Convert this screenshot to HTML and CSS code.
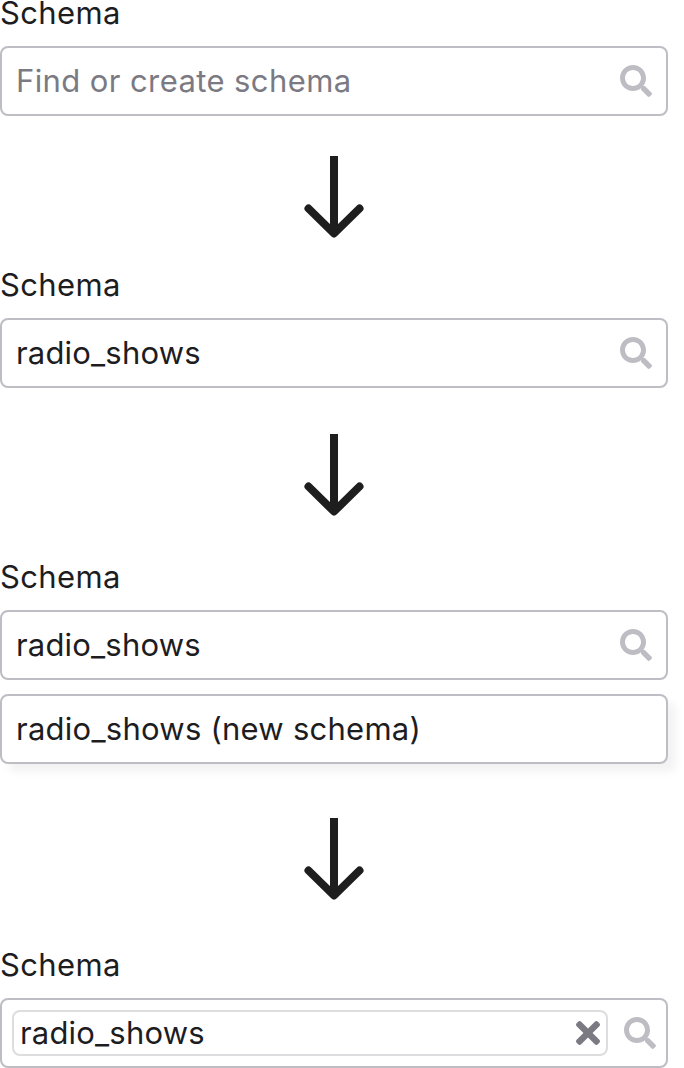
FILE: index.html
```
<!DOCTYPE html>
<html lang="en">
<head>
<meta charset="utf-8">
<title>Schema</title>
<link rel="stylesheet" href="styles.css">
</head>
<body>
<svg class="defs" width="0" height="0" aria-hidden="true">
  <symbol id="search" viewBox="0 0 512 512"><path d="M505 442.7L405.3 343c-4.5-4.5-10.6-7-17-7H372c27.6-35.3 44-79.7 44-128C416 93.1 322.9 0 208 0S0 93.1 0 208s93.1 208 208 208c48.3 0 92.7-16.4 128-44v16.3c0 6.4 2.5 12.5 7 17l99.7 99.7c9.4 9.4 24.6 9.4 33.9 0l28.3-28.3c9.4-9.4 9.4-24.6.1-34zM208 336c-70.7 0-128-57.2-128-128 0-70.7 57.2-128 128-128 70.7 0 128 57.2 128 128 0 70.7-57.2 128-128 128z"/></symbol>
  <symbol id="arrow" viewBox="0 0 60 82"><path d="M30 0V78"/><path d="M4.5 52.5L30 77.5L55.5 52.5" stroke-linecap="round" stroke-linejoin="round"/></symbol>
</svg>
<main class="flow">
  <section class="field">
    <div class="label"><span class="text">Schema</span></div>
    <div class="box"><span class="text placeholder">Find or create schema</span><svg class="search"><use href="#search"/></svg></div>
  </section>
  <svg class="arrow arrow-first"><use href="#arrow"/></svg>
  <section class="field">
    <div class="label"><span class="text">Schema</span></div>
    <div class="box"><span class="text value">radio_shows</span><svg class="search"><use href="#search"/></svg></div>
  </section>
  <svg class="arrow arrow-second"><use href="#arrow"/></svg>
  <section class="field">
    <div class="label"><span class="text">Schema</span></div>
    <div class="box"><span class="text value">radio_shows</span><svg class="search"><use href="#search"/></svg></div>
    <div class="box option"><span class="text">radio_shows (new schema)</span></div>
  </section>
  <svg class="arrow arrow-third"><use href="#arrow"/></svg>
  <section class="field">
    <div class="label"><span class="text">Schema</span></div>
    <div class="box selected">
      <div class="chip"><span class="text value">radio_shows</span><svg class="clear" viewBox="0 80 352 352"><path d="M242.72 256l100.07-100.07c12.28-12.28 12.28-32.19 0-44.48l-22.24-22.24c-12.28-12.28-32.19-12.28-44.48 0L176 189.28 75.93 89.21c-12.28-12.28-32.19-12.28-44.48 0L9.21 111.45c-12.28 12.28-12.28 32.19 0 44.48L109.28 256 9.21 356.07c-12.28 12.28-12.28 32.19 0 44.48l22.24 22.24c12.28 12.28 32.2 12.28 44.48 0L176 322.72l100.07 100.07c12.28 12.28 32.2 12.28 44.48 0l22.24-22.24c12.28-12.28 12.28-32.19 0-44.48L242.72 256z"/></svg></div>
      <svg class="search"><use href="#search"/></svg>
    </div>
  </section>
</main>
</body>
</html>
```
FILE: styles.css
```
* { box-sizing: border-box; }
body {
  margin: 0;
  background: #fff;
  color: #1d1d1f;
  font: 400 31px/28px Inter, "Liberation Sans", sans-serif;
  letter-spacing: 0.25px;
}
.defs { display: block; }
.flow { width: 668px; display: flex; flex-direction: column; }
.field { display: flex; flex-direction: column; }
.label { height: 26px; margin-bottom: 20px; line-height: 26px; letter-spacing: 0.38px; }
.text { display: block; white-space: nowrap; }
.box {
  height: 70px;
  display: flex;
  align-items: center;
  justify-content: space-between;
  padding: 0 14px;
  border: 2px solid #bebdc3;
  border-radius: 8px;
  background: #fff;
}
.placeholder { color: #7b7a83; letter-spacing: 0.4px; }
.value { letter-spacing: 0.18px; }
.search { width: 32px; height: 32px; fill: #bebdc3; flex: none; }
.option { margin-top: 14px; box-shadow: 8px 8px 8px rgba(0, 0, 0, 0.05); }
.arrow {
  width: 60px;
  height: 82px;
  align-self: center;
  fill: none;
  stroke: #1e1e1e;
  stroke-width: 8px;
}
.arrow-first { margin: 40px 0 34px; }
.arrow-second { margin: 46px 0 48px; }
.arrow-third { margin: 54px 0 52px; }
.selected { padding: 0 10px; }
.chip {
  width: 596px;
  height: 46px;
  display: flex;
  align-items: center;
  justify-content: space-between;
  padding: 0 6px;
  border: 2px solid #dddddf;
  border-radius: 8px;
}
.clear { width: 24px; height: 24px; fill: #7b7a83; }
```
